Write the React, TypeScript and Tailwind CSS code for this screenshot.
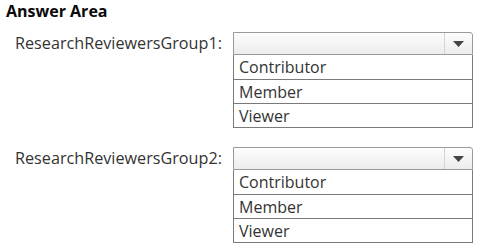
import React from "react";

const options = ["Contributor", "Member", "Viewer"];

function Dropdown() {
  return (
    <div className="w-[240px]">
      <div className="flex h-[23px] rounded-tr-[3px] border border-[#9a9a9a] bg-gradient-to-b from-[#fdfdfd] to-[#ececec]">
        <div className="flex-1" />
        <div className="flex w-[28px] items-center justify-center border-l border-[#d4d4d4]">
          <svg width="11" height="6" viewBox="0 0 11 6">
            <path d="M0 0 L11 0 L5.5 6 Z" fill="#444" />
          </svg>
        </div>
      </div>
      <div className="border-x border-b border-[#7a7a7a]">
        {options.map((o, i) => (
          <div
            key={o}
            className={`flex h-[24px] items-center pl-[5px] text-[16px] leading-none text-[#333] ${
              i > 0 ? "border-t border-[#7a7a7a]" : ""
            }`}
          >
            {o}
          </div>
        ))}
      </div>
    </div>
  );
}

function Row({ label }: { label: string }) {
  return (
    <div className="flex items-start">
      <div className="flex h-[22px] w-[218px] items-center text-[16.2px] leading-none text-[#333]">
        {label}
      </div>
      <Dropdown />
    </div>
  );
}

export default function App() {
  return (
    <div
      className="h-[249px] w-[483px] bg-white"
      style={{ fontFamily: '"Open Sans", "Noto Sans", sans-serif' }}
    >
      <div className="pl-[6px] pt-[2px] text-[16px] font-bold leading-[19px] text-[#0a0a0a]">
        Answer Area
      </div>
      <div className="flex flex-col gap-[19px] pl-[15px] pt-[11px]">
        <Row label="ResearchReviewersGroup1:" />
        <Row label="ResearchReviewersGroup2:" />
      </div>
    </div>
  );
}
